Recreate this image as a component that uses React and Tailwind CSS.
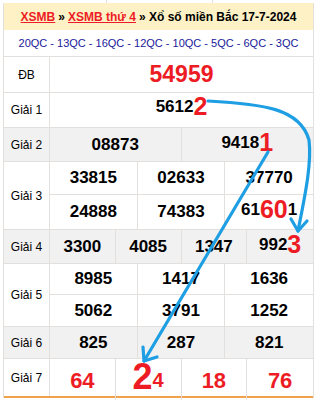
const red = 'text-[#ed1c24]';

const Label = ({ children }) => (
  <div className="w-[46px] shrink-0 flex items-center justify-center border-r border-[#e2dfdc] text-[12px] text-black">
    {children}
  </div>
);

const Cell = ({ children, className = 'items-center text-[17px] text-black' }) => (
  <div className={`flex justify-center font-bold border-r border-[#e2dfdc] last:border-r-0 ${className}`}>
    {children}
  </div>
);

const Big = ({ children, size = 'text-[25px]' }) => (
  <span className={`${red} ${size} font-bold leading-none`}>{children}</span>
);

const Arrows = () => (
  <svg className="absolute inset-0 pointer-events-none" width="317" height="400" viewBox="0 0 317 400">
    <g fill="none" stroke="#1e9fe3" strokeWidth="3.2" strokeLinecap="round" strokeLinejoin="round">
      <path d="M208 101 C 262 104, 300 108, 309 140 C 312 165, 304 200, 298 231" />
      <path d="M291 219 L298 231 L307 221" />
      <path d="M268 152 L144 361" />
      <path d="M143 347 L144 361 L157 357" />
    </g>
  </svg>
);

export default function App() {
  return (
    <div className="relative w-[317px] h-[400px] bg-white overflow-hidden" style={{ fontFamily: '"Liberation Sans", Arial, sans-serif' }}>
      <div className="h-[3px] ml-[3px] w-[311px] flex">
        <div className="w-[104px] border-r border-[#e2dfdc]" />
        <div className="w-[106px] border-r border-[#e2dfdc]" />
      </div>
      <div className="ml-[3px] w-[311px] border-x border-[#e2dfdc]">
        <div className="h-[27px] bg-[#fdf1c5] flex items-center justify-center text-[12px] font-bold text-black whitespace-nowrap">
          <span className={`${red} underline`}>XSMB</span>
          <span className="mx-[3px]">»</span>
          <span className={`${red} underline`}>XSMB thứ 4</span>
          <span className="ml-[3px]">» Xổ số miền Bắc 17-7-2024</span>
        </div>
        <div className="h-[27px] flex items-center justify-center text-[11px] text-[#1a1a9a] border-b border-[#e2dfdc] whitespace-nowrap">
          20QC - 13QC - 16QC - 12QC - 10QC - 5QC - 6QC - 3QC
        </div>

        <div className="h-[36px] flex border-b border-[#e2dfdc]">
          <Label>ĐB</Label>
          <div className="flex-1 flex items-center justify-center">
            <span className={`${red} text-[23px] font-bold`}>54959</span>
          </div>
        </div>

        <div className="h-[35px] flex border-b border-[#e2dfdc]">
          <Label>Giải 1</Label>
          <div className="flex-1 flex items-end justify-center pb-[8px] text-[17px] font-bold">
            5612<Big>2</Big>
          </div>
        </div>

        <div className="h-[34px] flex border-b border-[#e2dfdc] bg-[#f1f1f1]">
          <Label>Giải 2</Label>
          <div className="flex-1 grid grid-cols-2">
            <Cell>08873</Cell>
            <Cell className="items-end pb-[6px] text-[17px] text-black">9418<Big>1</Big></Cell>
          </div>
        </div>

        <div className="flex border-b border-[#e2dfdc]">
          <Label>Giải 3</Label>
          <div className="flex-1">
            <div className="h-[33px] grid grid-cols-3 border-b border-[#e2dfdc]">
              <Cell>33815</Cell>
              <Cell>02633</Cell>
              <Cell>37770</Cell>
            </div>
            <div className="h-[34px] grid grid-cols-3">
              <Cell>24888</Cell>
              <Cell>74383</Cell>
              <Cell className="items-end pb-[7px] text-[17px] text-black">61<Big>60</Big>1</Cell>
            </div>
          </div>
        </div>

        <div className="h-[34px] flex border-b border-[#e2dfdc] bg-[#f1f1f1]">
          <Label>Giải 4</Label>
          <div className="flex-1 grid grid-cols-4">
            <Cell>3300</Cell>
            <Cell>4085</Cell>
            <Cell>1347</Cell>
            <Cell className="items-end pb-[6px] text-[17px] text-black">992<Big>3</Big></Cell>
          </div>
        </div>

        <div className="flex border-b border-[#e2dfdc]">
          <Label>Giải 5</Label>
          <div className="flex-1">
            <div className="h-[31px] grid grid-cols-3 border-b border-[#e2dfdc]">
              <Cell>8985</Cell>
              <Cell>1417</Cell>
              <Cell>1636</Cell>
            </div>
            <div className="h-[31px] grid grid-cols-3">
              <Cell>5062</Cell>
              <Cell>3791</Cell>
              <Cell>1252</Cell>
            </div>
          </div>
        </div>

        <div className="h-[32px] flex border-b border-[#e2dfdc] bg-[#f1f1f1]">
          <Label>Giải 6</Label>
          <div className="flex-1 grid grid-cols-3">
            <Cell>825</Cell>
            <Cell>287</Cell>
            <Cell>821</Cell>
          </div>
        </div>

        <div className="h-[39px] flex border-b-2 border-b-[#f0a24a]">
          <Label>Giải 7</Label>
          <div className="flex-1 grid grid-cols-4">
            <Cell className={`items-center ${red} text-[22px]`}>64</Cell>
            <Cell className={`items-end pb-[6px] ${red} text-[20px]`}>
              <Big size="text-[36px]">2</Big>4
            </Cell>
            <Cell className={`items-center ${red} text-[22px]`}>18</Cell>
            <Cell className={`items-center ${red} text-[22px]`}>76</Cell>
          </div>
        </div>
      </div>
      <Arrows />
    </div>
  );
}
